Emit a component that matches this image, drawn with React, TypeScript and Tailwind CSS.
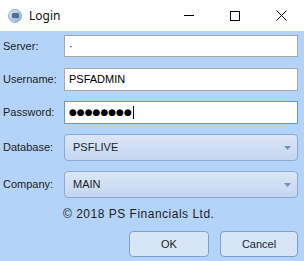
import React from "react";

const font = { fontFamily: '"Liberation Sans", Arial, sans-serif' };

function TextRow({ label, children, focused }: { label: string; children?: React.ReactNode; focused?: boolean }) {
  return (
    <div className="flex items-center h-[23px]">
      <div className="w-[64px] pl-[3px] text-[11px] text-[#1e1e1e]">{label}</div>
      <div
        className={`flex-1 h-full bg-white border flex items-center pl-[4px] text-[11px] text-black ${
          focused ? "border-[#5b9be0]" : "border-[#a8a8a8]"
        }`}
      >
        {children}
      </div>
    </div>
  );
}

function ComboRow({ label, value }: { label: string; value: string }) {
  return (
    <div className="flex items-center h-[27px]">
      <div className="w-[64px] pl-[3px] text-[11px] text-[#1e1e1e]">{label}</div>
      <div className="flex-1 h-full rounded-[4px] border border-[#8daad6] bg-gradient-to-b from-[#dbe7f7] to-[#c3d6f0] flex items-center pl-[8px] pr-[6px] text-[11px] text-[#1e1e1e]">
        <span className="flex-1">{value}</span>
        <svg width="7" height="4" viewBox="0 0 7 4">
          <path d="M0 0h7L3.5 4z" fill="#7191c2" />
        </svg>
      </div>
    </div>
  );
}

export default function App() {
  return (
    <div className="w-[304px] h-[261px] flex flex-col bg-[#b3d3f8] overflow-hidden" style={font}>
      {/* title bar */}
      <div className="h-[31px] bg-white flex items-center pl-[8px] shrink-0">
        <div className="w-[14px] h-[14px] rounded-full bg-gradient-to-br from-[#d7e9f7] to-[#7fb2dc] border border-[#8bb7dc] flex items-center justify-center">
          <div className="w-[7px] h-[5px] rounded-[1px] bg-[#5a6c88]" />
        </div>
        <span className="ml-[7px] text-[12px] text-[#111]" style={{ fontFamily: '"Segoe UI", "Noto Sans", sans-serif' }}>
          Login
        </span>
        <div className="flex-1" />
        <div className="w-[46px] flex justify-center">
          <div className="w-[10px] h-px bg-black" />
        </div>
        <div className="w-[46px] flex justify-center">
          <div className="w-[10px] h-[10px] border border-black" />
        </div>
        <div className="w-[46px] flex justify-center">
          <svg width="11" height="11" viewBox="0 0 11 11">
            <path d="M0.5 0.5L10.5 10.5M10.5 0.5L0.5 10.5" stroke="#000" strokeWidth="1" />
          </svg>
        </div>
      </div>

      {/* form */}
      <div className="flex flex-col pr-[6px] pt-[4px]">
        <div className="h-[22px] flex items-center">
          <div className="w-[64px] pl-[3px] text-[11px] text-[#1e1e1e]">Server:</div>
          <div className="flex-1 h-full bg-white border border-[#a8a8a8] flex items-center pl-[4px] text-[11px]">
            <span className="leading-none">·</span>
          </div>
        </div>
        <div className="mt-[11px]">
          <TextRow label="Username:">PSFADMIN</TextRow>
        </div>
        <div className="mt-[10px]">
          <TextRow label="Password:" focused>
            <span className="text-[9px]" style={{ fontFamily: '"DejaVu Sans", sans-serif' }}>
              ●●●●●●●●
            </span>
            <span className="ml-[1px] w-px h-[13px] bg-black" />
          </TextRow>
        </div>
        <div className="mt-[10px]">
          <ComboRow label="Database:" value="PSFLIVE" />
        </div>
        <div className="mt-[10px]">
          <ComboRow label="Company:" value="MAIN" />
        </div>
        <div className="mt-[9px] pl-[63px] text-[12px] tracking-[0.5px] text-[#1e1e1e] h-[14px] leading-[14px]">
          © 2018 PS Financials Ltd.
        </div>
        <div className="mt-[10px] flex justify-end gap-[11px]">
          <button className="w-[80px] h-[26px] rounded-[4px] border border-[#7f9fd2] bg-[#d6e5f8] text-[11px] text-[#1e1e1e]">
            OK
          </button>
          <button className="w-[78px] h-[26px] rounded-[4px] border border-[#7f9fd2] bg-[#d6e5f8] text-[11px] text-[#1e1e1e]">
            Cancel
          </button>
        </div>
      </div>
    </div>
  );
}
